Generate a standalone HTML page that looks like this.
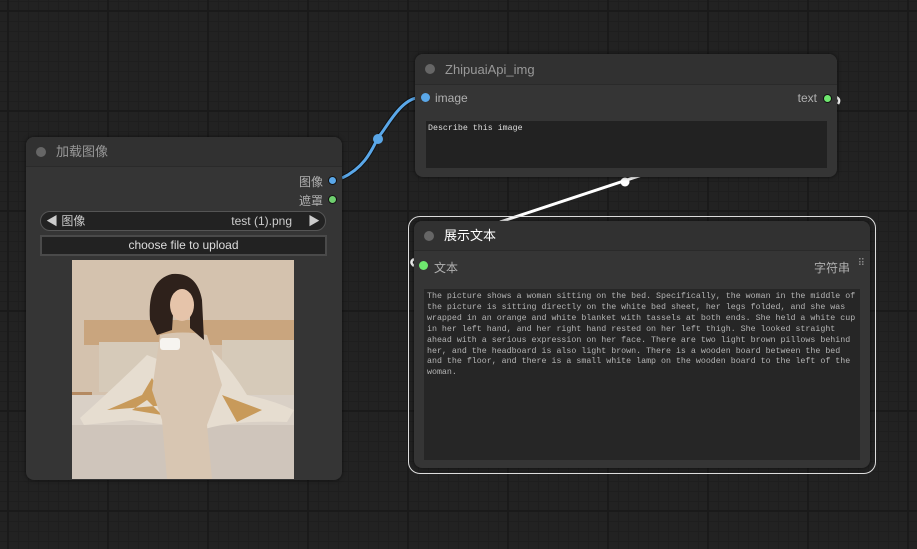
<!DOCTYPE html>
<html><head><meta charset="utf-8"><style>
*{margin:0;padding:0;box-sizing:border-box}
body{width:917px;height:549px;overflow:hidden;position:relative;background:#222;
background-image:linear-gradient(#1a1a1a 2px,transparent 2px),linear-gradient(90deg,#1a1a1a 2px,transparent 2px),linear-gradient(#1e1e1e 1px,transparent 1px),linear-gradient(90deg,#1e1e1e 1px,transparent 1px);
background-size:100px 100px,100px 100px,10px 10px,10px 10px;background-position:7px 10px,7px 10px,8px 1px,8px 1px;
font-family:"Liberation Sans","Noto Sans CJK SC",sans-serif;}
.node{position:absolute;background:#353535;border-radius:8px;box-shadow:0 0 4px rgba(0,0,0,.6)}
.title{height:30px;border-bottom:1px solid #2a2a2a;color:#999;font-size:13px;line-height:30px;padding-left:30px;position:relative;background:#313131;border-radius:8px 8px 0 0}
.title:before{content:"";position:absolute;left:10px;top:10px;width:10px;height:10px;border-radius:50%;background:#666}
.lbl{position:absolute;font-size:12px;color:#b0b0b0}
.dot{position:absolute;width:9px;height:9px;border-radius:50%;border:1px solid #111}
.mono{font-family:"Liberation Mono","DejaVu Sans Mono",monospace;font-size:8.3px;color:#b4b4b4;line-height:10.9px}
svg{position:absolute;left:0;top:0}
</style></head><body>
<svg width="917" height="549">
<path d="M342 178 C 370 165, 375 140, 380 135 S 400 100, 417 98" stroke="#111" stroke-width="5" fill="none"/>
<path d="M342 178 C 370 165, 375 140, 380 135 S 400 100, 417 98" stroke="#5aa7e8" stroke-width="3" fill="none"/>
<circle cx="378" cy="139" r="5" fill="#5aa7e8"/>
<path d="M500 222 L 645 174" stroke="#fff" stroke-width="3" fill="none"/>
<circle cx="625" cy="182" r="4.5" fill="#fff"/>
<path d="M836 97 q5 2 2 7" stroke="#fff" stroke-width="2.5" fill="none"/>
<path d="M414 259 q-5 3 0 7" stroke="#fff" stroke-width="2.5" fill="none"/>
</svg>

<div class="node" style="left:26px;top:137px;width:316px;height:343px">
 <div class="title">加载图像</div>
 <div class="lbl" style="right:19px;top:36px">图像</div>
 <div class="dot" style="right:5px;top:39px;background:#5aa7e8"></div>
 <div class="lbl" style="right:19px;top:55px">遮罩</div>
 <div class="dot" style="right:5px;top:58px;background:#6fcf6f"></div>
 <div style="position:absolute;left:14px;top:74px;width:286px;height:20px;border:1px solid #555;border-radius:10px;background:#222;color:#ccc;font-size:12px;line-height:18px">
  <span style="position:absolute;left:5px">◀ 图像</span><span style="position:absolute;right:33px">test (1).png</span><span style="position:absolute;right:5px">▶</span></div>
 <div style="position:absolute;left:14px;top:98px;width:287px;height:21px;border:2px solid #4a4a4a;background:#222;color:#ddd;font-size:12px;line-height:17px;text-align:center">choose file to upload</div>
 <svg style="left:46px;top:123px" width="222" height="219" viewBox="0 0 222 219">
  <rect width="222" height="219" fill="#d4c2ae"/>
  <rect x="12" y="60" width="210" height="25" fill="#c9a57e"/>
  <rect x="27" y="82" width="60" height="50" fill="#d6cab9"/>
  <rect x="150" y="80" width="72" height="55" fill="#d6cab9"/>
  <rect x="0" y="132" width="20" height="10" fill="#b48a62"/>
  <rect x="0" y="135" width="222" height="84" fill="#d9d0c6"/>
  <rect x="0" y="165" width="222" height="54" fill="#cfc5bb"/>
  <path d="M8 158 Q50 120 75 95 L100 105 L140 90 Q160 110 175 135 Q200 140 222 150 L215 162 Q160 160 130 170 L60 160 L12 165 Z" fill="#e6ddd0"/>
  <path d="M35 150 L70 135 L80 118 L95 145 Z M150 135 L190 150 L165 162Z M60 150 L90 155 L75 140Z" fill="#c89a5a"/>
  <path d="M88 75 Q110 70 135 75 L150 125 L135 165 L140 219 L95 219 L90 160 L80 130 Z" fill="#d8c6b2"/>
  <path d="M78 60 Q75 20 100 14 Q125 12 130 40 L132 80 L118 68 L118 40 L102 40 L100 70 L85 75 Z" fill="#2e211b"/>
  <ellipse cx="110" cy="45" rx="12" ry="16" fill="#e6c4aa"/>
  <rect x="88" y="78" width="20" height="12" rx="3" fill="#f6f4f0"/>
 </svg>
</div>

<div class="node" style="left:415px;top:54px;width:422px;height:123px">
 <div class="title" style="height:31px;line-height:31px;font-size:13px">ZhipuaiApi_img</div>
 <div class="dot" style="left:6px;top:39px;background:#5aa7e8;border:none"></div>
 <div class="lbl" style="left:20px;top:37px">image</div>
 <div class="lbl" style="right:20px;top:37px">text</div>
 <div class="dot" style="right:5px;top:40px;background:#6fe86f"></div>
 <div class="mono" style="position:absolute;left:11px;top:67px;width:401px;height:47px;background:#222;padding:3px 2px;color:#ddd">Describe this image</div>
</div>

<div style="position:absolute;left:408px;top:216px;width:468px;height:258px;border:1.5px solid #ddd;border-radius:12px"></div>
<div class="node" style="left:414px;top:221px;width:456px;height:247px">
 <div class="title" style="color:#fff;font-size:13px">展示文本</div>
 <div class="dot" style="left:5px;top:40px;background:#6fe86f;border:none"></div>
 <div class="lbl" style="left:20px;top:38px">文本</div>
 <div class="lbl" style="right:20px;top:38px">字符串</div>
 <div class="lbl" style="right:5px;top:37px;font-size:10px;color:#888">⠿</div>
 <div class="mono" style="position:absolute;left:10px;top:68px;width:436px;height:171px;background:#262626;padding:3px 3px">The picture shows a woman sitting on the bed. Specifically, the woman in the middle of the picture is sitting directly on the white bed sheet, her legs folded, and she was wrapped in an orange and white blanket with tassels at both ends. She held a white cup in her left hand, and her right hand rested on her left thigh. She looked straight ahead with a serious expression on her face. There are two light brown pillows behind her, and the headboard is also light brown. There is a wooden board between the bed and the floor, and there is a small white lamp on the wooden board to the left of the woman.</div>
</div>
</body></html>
